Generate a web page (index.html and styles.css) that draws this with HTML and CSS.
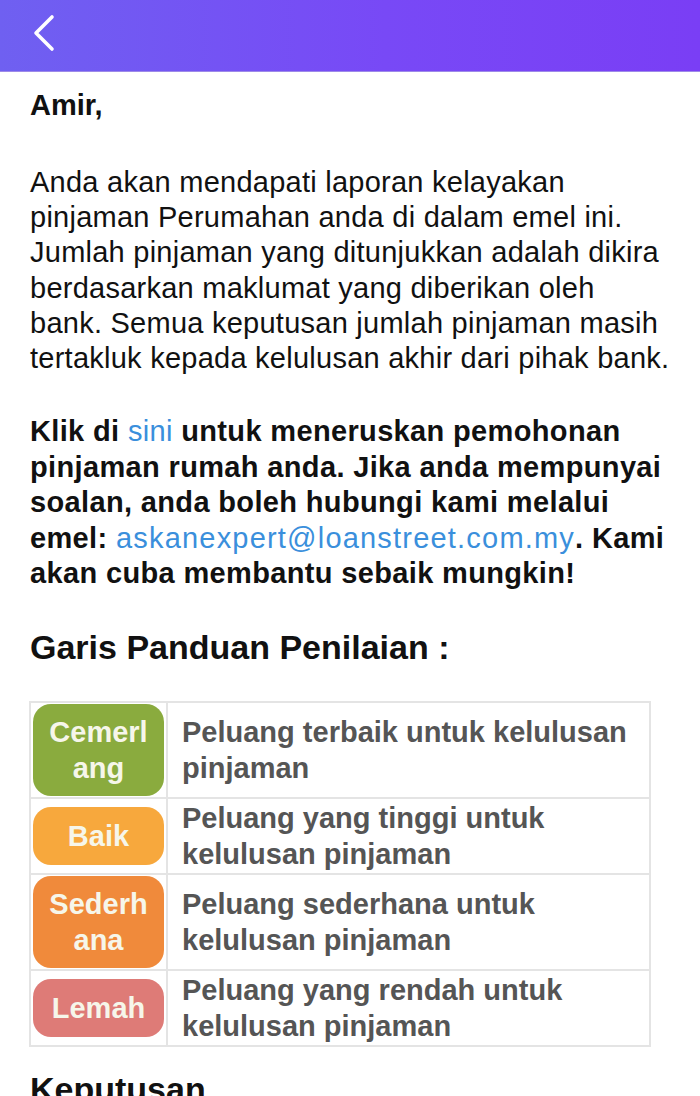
FILE: index.html
```html
<!DOCTYPE html>
<html lang="ms">
<head>
<meta charset="utf-8">
<title>Laporan Kelayakan</title>
<link rel="stylesheet" href="styles.css">
</head>
<body>
<header class="topbar">
  <svg class="back" width="26" height="40" viewBox="0 0 26 40"><path d="M21 4 L5 20 L21 36" fill="none" stroke="#fff" stroke-width="3.6" stroke-linecap="round" stroke-linejoin="round"/></svg>
</header>
<main class="content">
  <p class="greet">Amir,</p>
  <p class="intro">Anda akan mendapati laporan kelayakan pinjaman Perumahan anda di dalam emel ini. Jumlah pinjaman yang ditunjukkan adalah dikira berdasarkan maklumat yang diberikan oleh bank. Semua keputusan jumlah pinjaman masih tertakluk kepada kelulusan akhir dari pihak bank.</p>
  <p class="cta">Klik di <a class="link" href="#">sini</a> untuk meneruskan pemohonan pinjaman rumah anda. Jika anda mempunyai soalan, anda boleh hubungi kami melalui emel: <a class="link email" href="#">askanexpert@loanstreet.com.my</a>. Kami akan cuba membantu sebaik mungkin!</p>
  <h2 class="heading">Garis Panduan Penilaian :</h2>
  <table class="guide">
    <tr><td class="badge-cell"><div class="badge green">Cemerl<br>ang</div></td><td class="desc">Peluang terbaik untuk kelulusan pinjaman</td></tr>
    <tr><td class="badge-cell"><div class="badge yellow">Baik</div></td><td class="desc">Peluang yang tinggi untuk kelulusan pinjaman</td></tr>
    <tr><td class="badge-cell"><div class="badge orange">Sederh<br>ana</div></td><td class="desc">Peluang sederhana untuk kelulusan pinjaman</td></tr>
    <tr><td class="badge-cell"><div class="badge red">Lemah</div></td><td class="desc">Peluang yang rendah untuk kelulusan pinjaman</td></tr>
  </table>
  <h2 class="heading next">Keputusan</h2>
</main>
</body>
</html>
```
FILE: styles.css
```css
html, body { margin: 0; padding: 0; background: #fff; }
body { font-family: "Liberation Sans", Arial, sans-serif; color: #111; overflow: hidden; }
.topbar {
  height: 72px;
  background: linear-gradient(90deg, #6f60f1 0%, #7849f6 55%, #7a3ef5 100%);
  border-bottom: 1px solid #9d8ae8;
  box-sizing: border-box;
  display: flex;
  align-items: center;
  padding-left: 31px;
}
.back { display: block; margin-top: -5px; }
.content { padding: 0 30px 0 30px; }
.greet { font-size: 29px; font-weight: bold; margin: 16px 0 0; line-height: 35px; }
.intro { font-size: 29px; line-height: 35.2px; margin: 42px 0 0; letter-spacing: 0.25px; }
.cta { font-size: 29px; font-weight: bold; line-height: 35.5px; margin: 38px 0 0; letter-spacing: 0.35px; }
.link { color: #3a8fdc; text-decoration: none; font-weight: normal; }
.email { letter-spacing: 1.2px; }
.heading { font-size: 34px; font-weight: bold; margin: 35px 0 0; line-height: 40px; }
.guide {
  margin-top: 34px;
  width: 622px;
  margin-left: -1px;
  border-collapse: collapse;
}
.guide td { border: 2px solid #e4e4e4; }
.badge-cell { width: 131px; padding: 1px 2px; }
.badge {
  color: #f6f6ea;
  font-size: 29px;
  font-weight: bold;
  line-height: 36px;
  text-align: center;
  border-radius: 18px;
  padding: 10px 0;
}
.green { background: #8aab3e; }
.yellow { background: #f7a83d; padding: 11px 0; }
.orange { background: #f08a3b; }
.red { background: #de7b77; padding: 11px 0; }
.desc {
  color: #555;
  font-size: 29px;
  font-weight: bold;
  line-height: 36px;
  padding: 1px 8px 1px 14px;
  vertical-align: middle;
}
.next { margin-top: 22px; }
```
